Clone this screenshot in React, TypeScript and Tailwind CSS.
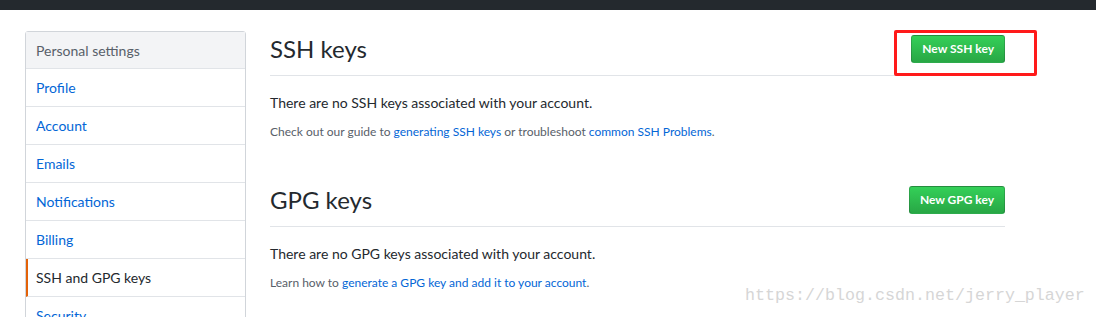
const NAV = ["Profile", "Account", "Emails", "Notifications", "Billing", "SSH and GPG keys", "Security"];

const FONT = "font-['Lato','Noto_Sans',sans-serif]";

function GreenButton({ label }: { label: string }) {
  return (
    <button
      type="button"
      className="h-[28px] rounded-[3px] border border-[rgba(27,31,35,0.2)] bg-gradient-to-b from-[#34d058] to-[#28a745] px-[10px] text-[12px] font-bold leading-[26px] text-white"
    >
      {label}
    </button>
  );
}

function Subhead({ title, children }: { title: string; children: React.ReactNode }) {
  return (
    <div className="flex h-[45px] items-start justify-between border-b border-[#e1e4e8] pb-2">
      <h2 className="text-[24px] leading-[36px] font-normal text-[#24292e]">{title}</h2>
      <div className="relative mt-1">{children}</div>
    </div>
  );
}

export default function App() {
  return (
    <div className={`h-[317px] overflow-hidden bg-white ${FONT}`}>
      <div className="h-[10px] bg-[#24292e]" />
      <div className="flex pt-[21px] pl-[25px]">
        <nav className="w-[221px] shrink-0 rounded-t-[3px] border border-[#d1d5da]">
          <div className="flex h-[37px] items-center border-b border-[#e1e4e8] bg-[#f3f4f6] pl-[10px] text-[14px] text-[#586069]">
            Personal settings
          </div>
          {NAV.map((item) => {
            const active = item === "SSH and GPG keys";
            return (
              <div
                key={item}
                className={
                  active
                    ? "flex h-[38px] items-center border-b border-[#e1e4e8] border-l-2 border-l-[#e36209] pl-[8px] text-[14px] text-[#24292e]"
                    : "flex h-[38px] items-center border-b border-[#e1e4e8] pl-[10px] text-[14px] text-[#0366d6]"
                }
              >
                {item}
              </div>
            );
          })}
        </nav>

        <main className="ml-[24px] w-[735px]">
          <Subhead title="SSH keys">
            <GreenButton label="New SSH key" />
            <div className="pointer-events-none absolute top-[-5px] left-[-17px] h-[46px] w-[143px] rounded-[2px] border-[3px] border-[#ff1a1a]" />
          </Subhead>
          <p className="mt-4 text-[14px] leading-[21px] text-[#24292e]">There are no SSH keys associated with your account.</p>
          <p className="mt-[10px] text-[12px] leading-[18px] text-[#586069]">
            Check out our guide to <span className="text-[#0366d6]">generating SSH keys</span> or troubleshoot{" "}
            <span className="text-[#0366d6]">common SSH Problems</span>.
          </p>

          <div className="mt-[41px]">
            <Subhead title="GPG keys">
              <GreenButton label="New GPG key" />
            </Subhead>
          </div>
          <p className="mt-4 text-[14px] leading-[21px] text-[#24292e]">There are no GPG keys associated with your account.</p>
          <p className="mt-[10px] text-[12px] leading-[18px] text-[#586069]">
            Learn how to <span className="text-[#0366d6]">generate a GPG key and add it to your account</span>.
          </p>
        </main>
      </div>
      <div className="pointer-events-none absolute top-[284px] left-[745px] font-['Liberation_Mono',monospace] text-[16.67px] leading-[24px] text-[#d6d6d6]">
        https://blog.csdn.net/jerry_player
      </div>
    </div>
  );
}
